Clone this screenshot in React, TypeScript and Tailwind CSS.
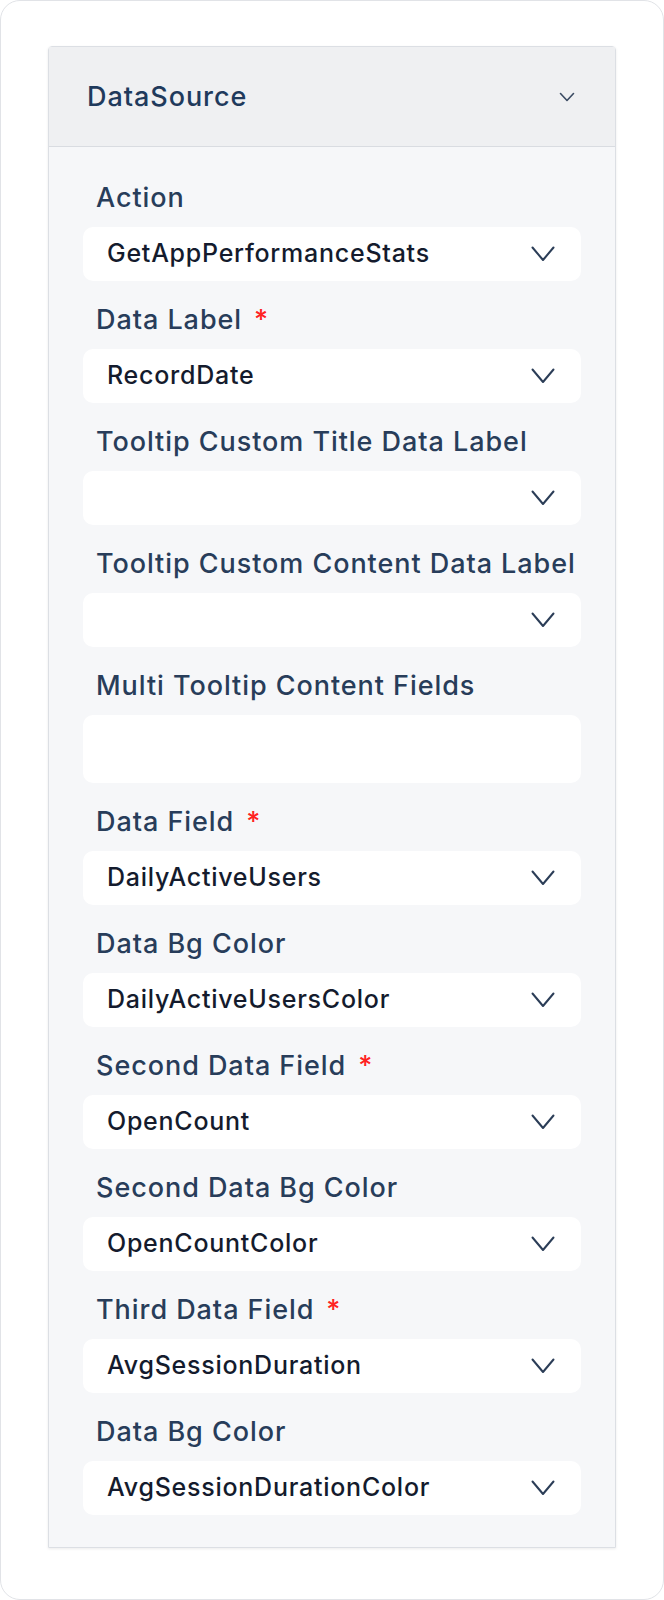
const FIELDS = [
    { label: "Action", value: "GetAppPerformanceStats" },
    { label: "Data Label", value: "RecordDate", required: true },
    { label: "Tooltip Custom Title Data Label", value: "" },
    { label: "Tooltip Custom Content Data Label", value: "" },
    { label: "Multi Tooltip Content Fields", value: "", multi: true },
    { label: "Data Field", value: "DailyActiveUsers", required: true },
    { label: "Data Bg Color", value: "DailyActiveUsersColor" },
    { label: "Second Data Field", value: "OpenCount", required: true },
    { label: "Second Data Bg Color", value: "OpenCountColor" },
    { label: "Third Data Field", value: "AvgSessionDuration", required: true },
    { label: "Data Bg Color", value: "AvgSessionDurationColor" },
]

function Chevron({ small }: { small?: boolean }) {
    if (small) {
        return (
            <svg width="16" height="10" viewBox="0 0 16 10" fill="none">
                <path d="M1.5 1.5 L8 8.5 L14.5 1.5" stroke="#3b4b63" strokeWidth="1.6" strokeLinecap="round" strokeLinejoin="round" />
            </svg>
        )
    }
    return (
        <svg width="24" height="16" viewBox="0 0 24 16" fill="none">
            <path d="M1.5 1.5 L12 14 L22.5 1.5" stroke="#2b3d57" strokeWidth="2" strokeLinecap="round" strokeLinejoin="round" />
        </svg>
    )
}

export default function App() {
    return (
        <div className="bg-white font-['Inter',sans-serif]">
            <div className="h-[1600px] rounded-[20px] border border-[#e1e3e7] bg-white pt-[45px] px-[47px]">
                <section className="border border-[#dcdfe4] shadow-[0_1px_3px_rgba(0,0,0,0.08)] rounded-t-[4px]">
                    {/* HEADER */}
                    <div className="flex h-[100px] items-center justify-between border-b border-[#d9dce1] bg-[#eff0f2] pl-[38px] pr-[40px]">
                        <span className="pt-[2px] text-[27px] font-medium tracking-[0.035em] text-[#1f3a5c]">
                            DataSource
                        </span>
                        <Chevron small />
                    </div>

                    {/* FIELDS */}
                    <div className="flex flex-col gap-[20px] bg-[#f6f7f9] px-[34px] pt-[32px] pb-[32px]">
                        {FIELDS.map((f, i) => (
                            <div key={i}>
                                <div className="mb-[14px] h-[34px] pl-[13px] text-[27px] leading-[38px] font-medium tracking-[0.035em] text-[#283d5a]">
                                    {f.label}
                                    {f.required && <span className="ml-[12px] text-[#ff2222]">*</span>}
                                </div>
                                {f.multi ? (
                                    <div className="h-[68px] rounded-[10px] bg-white" />
                                ) : (
                                    <div className="flex h-[54px] items-center justify-between rounded-[10px] bg-white pl-[24px] pr-[26px]">
                                        <span className="text-[25px] font-medium tracking-[0.03em] text-[#141b2d]">
                                            {f.value}
                                        </span>
                                        <Chevron />
                                    </div>
                                )}
                            </div>
                        ))}
                    </div>
                </section>
            </div>
        </div>
    )
}
